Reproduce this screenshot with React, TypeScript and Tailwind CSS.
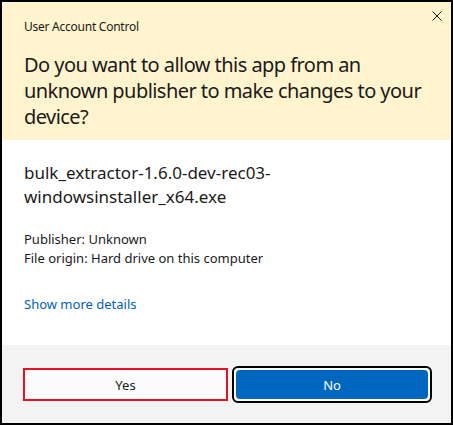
const UacPrompt = () => {
    return (
        <div className="w-[453px] h-[425px] border-2 border-black flex flex-col bg-white text-[#1a1a1a] font-['Noto_Sans',sans-serif]">
            {/* Header */}
            <div className="relative h-[138px] bg-[#fff4ce] pl-[22px] pt-[17px]">
                <button className="absolute right-[9px] top-[9px] w-[10px] h-[10px]">
                    <svg viewBox="0 0 10 10" className="w-[10px] h-[10px]" fill="none" stroke="#1a1a1a" strokeWidth="1">
                        <path d="M0.5 0.5L9.5 9.5M9.5 0.5L0.5 9.5" />
                    </svg>
                </button>
                <p className="text-[12px] leading-[16px] tracking-[-0.25px]">User Account Control</p>
                <h1 className="mt-[17px] w-[405px] text-[20px] leading-[26px] tracking-[-0.55px]">
                    Do you want to allow this app from an unknown publisher to make changes to your device?
                </h1>
            </div>

            {/* Body */}
            <div className="h-[205px] pl-[22px] pt-[21px]">
                <p className="text-[17px] leading-[24px]">
                    bulk_extractor-1.6.0-dev-rec03-
                    <br />
                    windowsinstaller_x64.exe
                </p>
                <div className="mt-[21px] text-[13px] leading-[19px]">
                    <p>Publisher: Unknown</p>
                    <p>File origin: Hard drive on this computer</p>
                </div>
                <a className="block mt-[27px] text-[13px] leading-[19px] text-[#005fb8]">Show more details</a>
            </div>

            {/* Footer */}
            <div className="flex-1 bg-[#f3f3f3] flex items-center pl-[21px] gap-[4px]">
                <button className="w-[205px] h-[33px] pt-[2px] border-2 border-[#e81123] bg-[#fbfbfb] text-[13px] leading-[16px] text-[#1a1a1a]">
                    Yes
                </button>
                <div className="w-[200px] h-[37px] border-2 border-black rounded-[6px] p-[2px] bg-white">
                    <button className="w-full h-full pt-[2px] rounded-[4px] bg-[#0067c0] text-[13px] leading-[16px] text-white">
                        No
                    </button>
                </div>
            </div>
        </div>
    );
};

export default UacPrompt;
